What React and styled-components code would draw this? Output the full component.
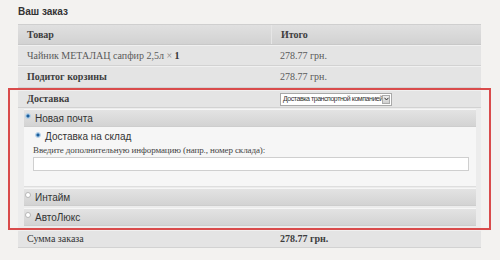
import React from 'react';
import styled, { createGlobalStyle } from 'styled-components';

const GlobalStyle = createGlobalStyle`
  html, body {
    margin: 0;
    padding: 0;
    background: #f3f2f0;
  }
  body {
    font-family: "Liberation Serif", "Times New Roman", serif;
    color: #555;
  }
`;

const Page = styled.div`
  width: 463px;
  padding: 0 19px 0 18px;
`;

const Title = styled.div`
  font-family: "Liberation Sans", Arial, sans-serif;
  font-weight: bold;
  font-size: 10px;
  line-height: 14px;
  color: #333;
  padding: 5px 0 5px;
`;

const Row = styled.div`
  display: grid;
  grid-template-columns: 253px 1fr;
  align-items: center;
  height: ${(p) => p.h || 20}px;
  background: ${(p) =>
    p.head ? 'linear-gradient(#e0e0e0, #d2d2d2)' : '#e4e4e4'};
  border-top: 1px solid ${(p) => (p.head ? '#cfcfcf' : '#f0f0f0')};
  border-bottom: 1px solid ${(p) => (p.head ? '#c8c8c8' : '#d2d2d2')};
  box-sizing: border-box;
`;

const Cell = styled.div`
  padding-left: 9px;
  font-family: "Liberation Serif", "Times New Roman", serif;
  font-size: 10px;
  line-height: 12px;
  color: ${(p) => (p.bold ? '#3d3d3d' : p.dark ? '#333' : '#5a5a5a')};
  font-weight: ${(p) => (p.bold ? 'bold' : 'normal')};
  ${(p) => p.divider && 'border-left: 1px solid #e6e6e6; height: 100%; display: flex; align-items: center; box-sizing: border-box;'}
`;

const Qty = styled.span`
  color: #888;
  b {
    color: #333;
  }
`;

const Marked = styled.div`
  margin: 0 -10px;
  border: 2px solid #d94b4b;
  padding: 0 8px 0 8px;
`;

const Select = styled.div`
  display: inline-flex;
  align-items: center;
  width: 110px;
  height: 11px;
  background: #fff;
  border: 1px solid #a9a9a9;
  font-family: "Liberation Sans", Arial, sans-serif;
  font-size: 7px;
  letter-spacing: -0.45px;
  color: #333;
  span {
    flex: 1;
    padding-left: 2px;
    white-space: nowrap;
    overflow: hidden;
  }
`;

const Arrow = styled.div`
  width: 8px;
  height: 9px;
  margin-right: 1px;
  background: linear-gradient(#eee, #cfcfcf);
  border: 1px solid #aaa;
  box-sizing: border-box;
  display: flex;
  align-items: center;
  justify-content: center;
`;

const Holder = styled.div`
  background: #ececec;
  padding: 1px 5px 2px 6px;
`;

const Bar = styled.div`
  display: flex;
  align-items: center;
  gap: 4px;
  height: 18px;
  margin-top: ${(p) => p.gap || 0}px;
  padding-left: 1px;
  box-sizing: border-box;
  background: linear-gradient(#e3e3e3, #d3d3d3);
  border-top: 1px solid #f6f6f6;
  border-bottom: 1px solid #cdcdcd;
  font-family: "Liberation Sans", Arial, sans-serif;
  font-size: 10px;
  color: #333;
`;

const Radio = styled.span`
  width: 6px;
  height: 6px;
  border-radius: 50%;
  flex: none;
  margin-top: -4px;
  box-sizing: border-box;
  background: ${(p) => (p.on ? 'radial-gradient(#1d5f9c 40%, #9cc3e6 70%)' : '#fff')};
  border: 1px solid ${(p) => (p.on ? '#b4cfe6' : '#b7b7b7')};
`;

const Body = styled.div`
  background: #f6f6f6;
  border-bottom: 1px solid #dedede;
  padding: 3px 7px 15px 9px;
`;

const Option = styled.div`
  display: flex;
  align-items: center;
  gap: 4px;
  padding-left: 2px;
  font-family: "Liberation Sans", Arial, sans-serif;
  font-size: 10px;
  color: #333;
  height: 13px;
`;

const Hint = styled.div`
  font-family: "Liberation Serif", "Times New Roman", serif;
  font-size: 9px;
  letter-spacing: -0.1px;
  color: #444;
  line-height: 12px;
  margin-top: 1px;
`;

const Input = styled.div`
  height: 12px;
  margin-top: 1px;
  background: #fff;
  border: 1px solid #cfcfcf;
`;

export default function App() {
  return (
    <Page>
      <GlobalStyle />
      <Title>Ваш заказ</Title>
      <Row head h={21}>
        <Cell bold>Товар</Cell>
        <Cell bold divider>Итого</Cell>
      </Row>
      <Row h={21}>
        <Cell>
          Чайник МЕТАЛАЦ сапфир 2,5л <Qty>× <b>1</b></Qty>
        </Cell>
        <Cell>278.77 грн.</Cell>
      </Row>
      <Row h={22}>
        <Cell bold>Подитог корзины</Cell>
        <Cell>278.77 грн.</Cell>
      </Row>
      <Marked>
        <Row h={18}>
          <Cell bold>Доставка</Cell>
          <Cell>
            <Select>
              <span>Доставка транспортной компанией</span>
              <Arrow>
                <svg width="5" height="4" viewBox="0 0 5 4">
                  <path d="M0.5 0.8 L2.5 3 L4.5 0.8" fill="none" stroke="#333" strokeWidth="1" />
                </svg>
              </Arrow>
            </Select>
          </Cell>
        </Row>
        <Holder>
          <Bar>
            <Radio on />
            Новая почта
          </Bar>
          <Body>
            <Option>
              <Radio on />
              Доставка на склад
            </Option>
            <Hint>Введите дополнительную информацию (напр., номер склада):</Hint>
            <Input />
          </Body>
          <Bar gap={1}>
            <Radio />
            Интайм
          </Bar>
          <Bar gap={2}>
            <Radio />
            АвтоЛюкс
          </Bar>
        </Holder>
      </Marked>
      <Row h={18}>
        <Cell dark>Сумма заказа</Cell>
        <Cell bold>278.77 грн.</Cell>
      </Row>
    </Page>
  );
}
